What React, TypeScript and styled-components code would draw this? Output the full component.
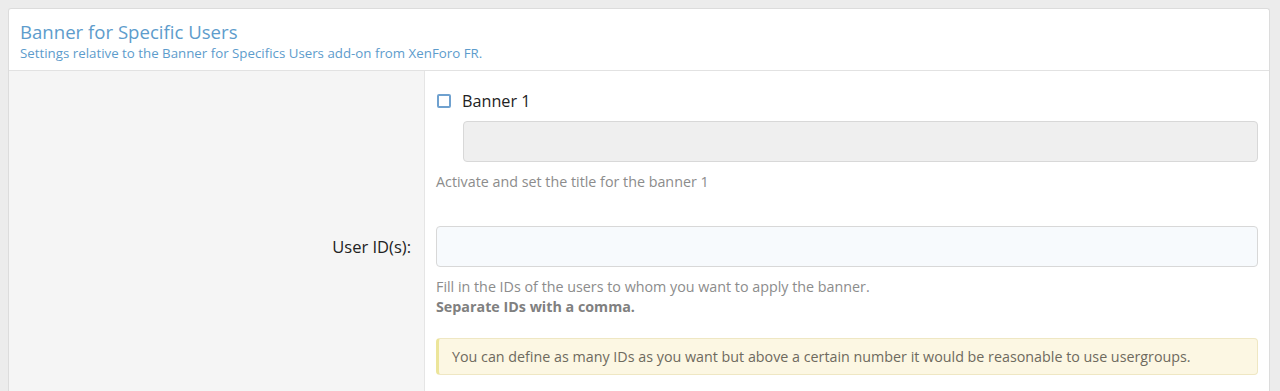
import React from 'react'
import styled, { createGlobalStyle } from 'styled-components'

const GlobalStyle = createGlobalStyle`
  html, body {
    margin: 0;
    padding: 0;
    background: #ececec;
  }
  body {
    padding: 8px 10px 0 8px;
    font-family: 'Open Sans', 'Noto Sans', sans-serif;
    color: #141414;
  }
`

const Block = styled.div`
  background: #fff;
  border: 1px solid #dcdcdc;
  border-bottom: none;
  border-radius: 3px 3px 0 0;
`

const Header = styled.div`
  padding: 10px 11px 8px;
  border-bottom: 1px solid #e2e2e2;
`

const Title = styled.h2`
  margin: 0;
  font-size: 18.6px;
  font-weight: 400;
  line-height: 25px;
  color: #5d9ccc;
`

const Desc = styled.div`
  font-size: 13.3px;
  line-height: 18px;
  color: #5d9ccc;
`

const Row = styled.div`
  display: grid;
  grid-template-columns: 416px 1fr;
`

const LabelCell = styled.div<{ $top: number }>`
  background: #f5f5f5;
  border-right: 1px solid #e5e5e5;
  padding: ${(p) => p.$top}px 13px 0 0;
  text-align: right;
  font-size: 16.5px;
  line-height: 22px;
  color: #222;
`

const FieldCell = styled.div<{ $pt: number; $pb: number }>`
  padding: ${(p) => p.$pt}px 11px ${(p) => p.$pb}px 11px;
`

const CheckLine = styled.label`
  display: flex;
  align-items: center;
  gap: 11px;
  font-size: 16.2px;
  line-height: 22px;
  color: #222;
`

const Box = styled.span`
  width: 14px;
  height: 14px;
  border: 2px solid #6fa1cf;
  border-radius: 2px;
  box-sizing: border-box;
  margin-left: 1px;
`

const Dependent = styled.div`
  padding-left: 27px;
  margin-top: 9px;
`

const Input = styled.div<{ $disabled?: boolean }>`
  height: 41px;
  box-sizing: border-box;
  border: 1px solid #d8d8d8;
  border-radius: 4px;
  background: ${(p) => (p.$disabled ? '#efefef' : '#f7fafd')};
`

const Hint = styled.div<{ $mt: number }>`
  margin-top: ${(p) => p.$mt}px;
  font-size: 14.3px;
  line-height: 20px;
  color: #8c8c8c;
  b {
    font-weight: 700;
    color: #808080;
  }
`

const Notice = styled.div`
  margin-top: 21px;
  padding: 8px 13px;
  background: #fcf7e3;
  border: 1px solid #efe7c3;
  border-left: 3px solid #ece59a;
  border-radius: 4px;
  font-size: 14.3px;
  line-height: 19px;
  color: #6e6a5e;
`

export default function App() {
  return (
    <>
      <GlobalStyle />
      <Block>
        <Header>
          <Title>Banner for Specific Users</Title>
          <Desc>Settings relative to the Banner for Specifics Users add-on from XenForo FR.</Desc>
        </Header>
        <Row>
          <LabelCell $top={0} />
          <FieldCell $pt={19} $pb={0}>
            <CheckLine>
              <Box />
              Banner 1
            </CheckLine>
            <Dependent>
              <Input $disabled />
            </Dependent>
            <Hint $mt={10}>Activate and set the title for the banner 1</Hint>
          </FieldCell>
        </Row>
        <Row>
          <LabelCell $top={44}>User ID(s):</LabelCell>
          <FieldCell $pt={34} $pb={20}>
            <Input />
            <Hint $mt={10}>
              Fill in the IDs of the users to whom you want to apply the banner.
              <br />
              <b>Separate IDs with a comma.</b>
            </Hint>
            <Notice>
              You can define as many IDs as you want but above a certain number it would be reasonable to use usergroups.
            </Notice>
          </FieldCell>
        </Row>
      </Block>
    </>
  )
}
